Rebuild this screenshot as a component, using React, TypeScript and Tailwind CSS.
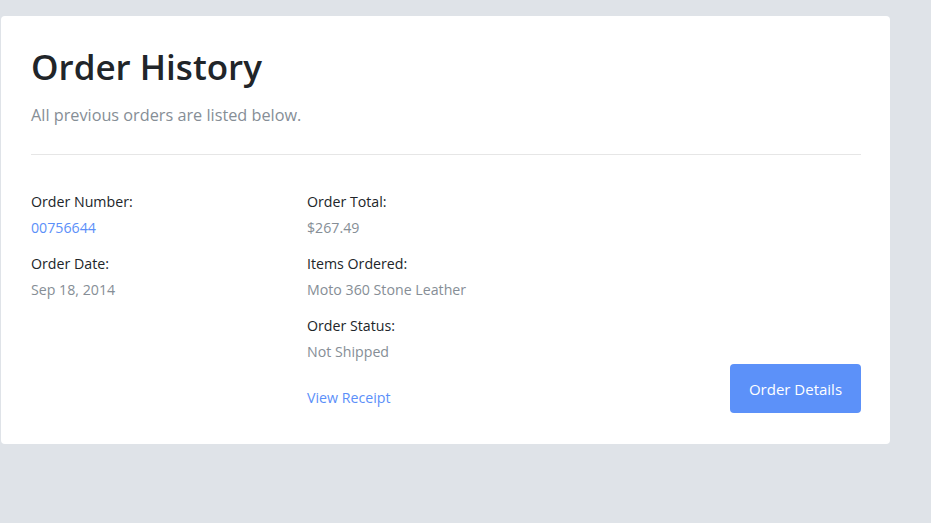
export default function App() {
  return (
    <div className="min-h-[523px] w-full bg-[#dfe3e8] pt-[16px] pl-[1px]" style={{ fontFamily: '"Open Sans", sans-serif' }}>
      <div className="w-[889px] h-[428px] bg-white rounded-[4px] pl-[30px] pr-[29px] pt-[30px] flex flex-col">
        <h1 className="text-[35px] leading-[42px] font-semibold text-[#212529]">Order History</h1>
        <p className="mt-[15px] text-[16.25px] leading-[24px] text-[#868e96]">All previous orders are listed below.</p>
        <div className="mt-[27px] h-px bg-[#e6e6e6]" />
        <div className="mt-[37px] grid grid-cols-[276px_276px_1fr] text-[14.2px] leading-[20px]">
          <div className="flex flex-col">
            <div className="text-[#212529]">Order Number:</div>
            <div className="mt-[6px] text-[#5b8ff9]">00756644</div>
            <div className="mt-[16px] text-[#212529]">Order Date:</div>
            <div className="mt-[6px] text-[#868e96]">Sep 18, 2014</div>
          </div>
          <div className="flex flex-col">
            <div className="text-[#212529]">Order Total:</div>
            <div className="mt-[6px] text-[#868e96]">$267.49</div>
            <div className="mt-[16px] text-[#212529]">Items Ordered:</div>
            <div className="mt-[6px] text-[#868e96]">Moto 360 Stone Leather</div>
            <div className="mt-[16px] text-[#212529]">Order Status:</div>
            <div className="mt-[6px] text-[#868e96]">Not Shipped</div>
            <a className="mt-[26px] text-[#5b8ff9]">View Receipt</a>
          </div>
          <div className="flex flex-col justify-end items-end">
            <button className="w-[131px] h-[49px] mb-[-5px] rounded-[4px] bg-[#5c91f9] text-white text-[15px]">Order Details</button>
          </div>
        </div>
      </div>
    </div>
  );
}
